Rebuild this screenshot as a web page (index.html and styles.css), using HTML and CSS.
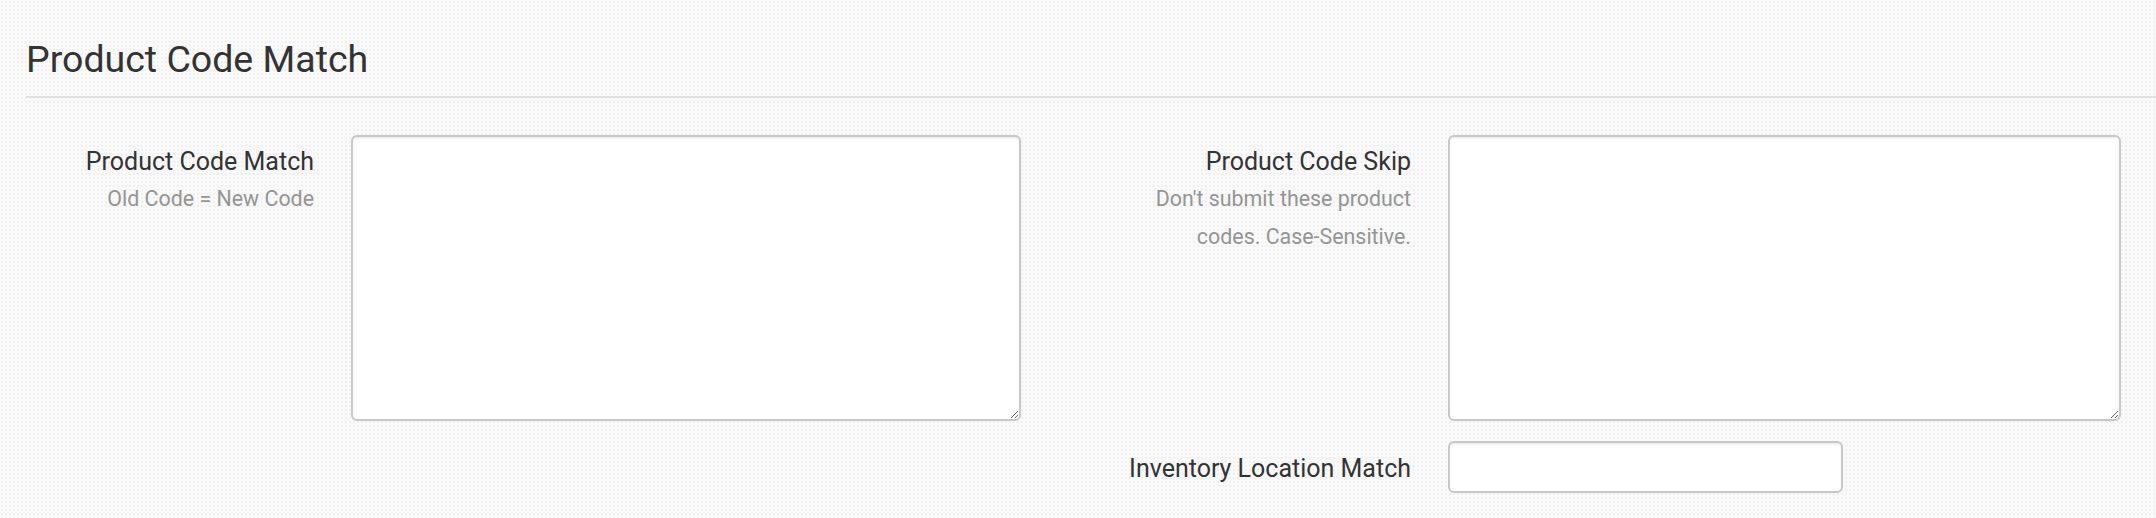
FILE: index.html
```html
<!DOCTYPE html>
<html lang="en">
<head>
<meta charset="utf-8">
<title>Product Code Match</title>
<link rel="stylesheet" href="styles.css">
</head>
<body>
<div class="page">
  <h3 class="section-title">Product Code Match</h3>
  <form class="form-grid">
    <div class="group group-left">
      <div class="label-cell">
        <label class="label" for="pcm">Product Code Match</label>
        <div class="help">Old Code = New Code</div>
      </div>
      <textarea id="pcm" class="field textarea"></textarea>
    </div>
    <div class="group group-right">
      <div class="label-cell">
        <label class="label" for="pcs">Product Code Skip</label>
        <div class="help">Don't submit these product codes. Case-Sensitive.</div>
      </div>
      <textarea id="pcs" class="field textarea"></textarea>
    </div>
    <div class="group group-right group-inline">
      <div class="label-cell">
        <label class="label label-inline" for="ilm">Inventory Location Match</label>
      </div>
      <input id="ilm" class="field input" type="text">
    </div>
  </form>
</div>
</body>
</html>
```

FILE: styles.css
```css
html, body {
  margin: 0;
  padding: 0;
}

body {
  width: 2156px;
  height: 518px;
  overflow: hidden;
  font-family: Roboto, "Liberation Sans", sans-serif;
  color: #333333;
  background-color: #f9f9f9;
  background-image: radial-gradient(circle, rgba(0, 0, 0, 0.035) 0.9px, transparent 1.2px);
  background-size: 4px 4px;
}

.page {
  padding-left: 26px;
}

.section-title {
  margin: 0;
  padding-top: 39px;
  padding-bottom: 17px;
  font-size: 37.5px;
  line-height: 40px;
  font-weight: 400;
  color: #333333;
  border-bottom: 2px solid #e2e2e2;
}

.form-grid {
  margin-top: 37px;
  display: grid;
  grid-template-columns: 1097px 998px;
  row-gap: 20px;
}

.group {
  display: grid;
  column-gap: 37px;
  align-items: start;
}

.group-left {
  grid-template-columns: 288px 670px;
}

.group-right {
  grid-column: 2;
  grid-template-columns: 288px 673px;
}

.group-inline {
  grid-template-columns: 288px 395px;
  align-items: center;
}

.label-cell {
  text-align: right;
}

.label {
  display: block;
  padding-top: 8.5px;
  font-size: 25px;
  line-height: 36px;
  color: #333333;
}

.label-inline {
  padding-top: 4px;
}

.help {
  font-size: 21.4px;
  line-height: 38px;
  color: #959595;
}

.field {
  box-sizing: border-box;
  margin: 0;
  background: #ffffff;
  border: 2px solid #c8c8c8;
  border-radius: 6px;
  box-shadow: inset 0 1.5px 1.5px rgba(0, 0, 0, 0.08);
  font-family: Roboto, "Liberation Sans", sans-serif;
  font-size: 21px;
  color: #555555;
  outline: none;
}

.textarea {
  height: 286px;
  resize: vertical;
  display: block;
}

.group-left .textarea {
  width: 670px;
}

.group-right .textarea {
  width: 673px;
}

.input {
  width: 395px;
  height: 52px;
  display: block;
}
```
